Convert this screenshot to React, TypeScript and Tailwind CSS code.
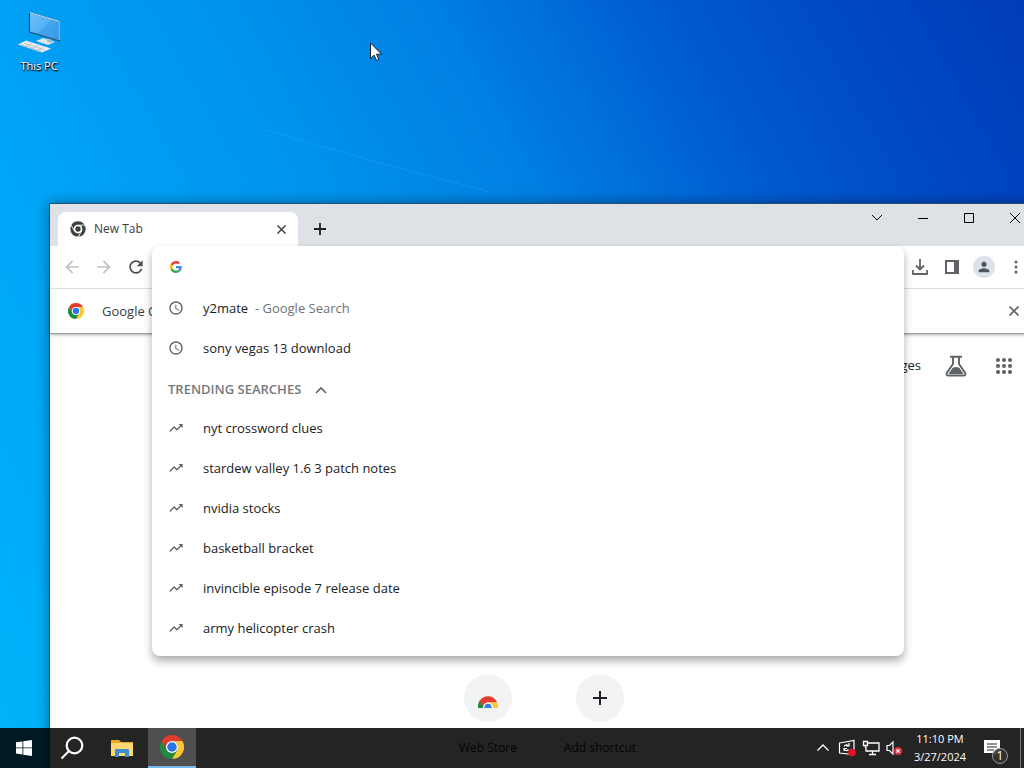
import { useState, type ReactNode } from "react"
import clsx from "clsx"

const recent = [
  { text: "y2mate", hint: "Google Search" },
  { text: "sony vegas 13 download", hint: "" },
]

const trending = [
  "nyt crossword clues",
  "stardew valley 1.6 3 patch notes",
  "nvidia stocks",
  "basketball bracket",
  "invincible episode 7 release date",
  "army helicopter crash",
]

const paths = {
  back: "M20 11H7.83l5.59-5.59L12 4l-8 8 8 8 1.41-1.41L7.83 13H20v-2z",
  forward: "M4 11h12.17l-5.59-5.59L12 4l8 8-8 8-1.41-1.41L16.17 13H4v-2z",
  reload:
    "M17.65 6.35C16.2 4.9 14.21 4 12 4c-4.42 0-7.99 3.58-7.99 8s3.57 8 7.99 8c3.73 0 6.84-2.55 7.73-6h-2.08c-.82 2.33-3.04 4-5.65 4-3.31 0-6-2.69-6-6s2.69-6 6-6c1.66 0 3.14.69 4.22 1.78L13 11h7V4l-2.35 2.35z",
  clock:
    "M11.99 2C6.47 2 2 6.48 2 12s4.47 10 9.99 10C17.52 22 22 17.52 22 12S17.52 2 11.99 2zM12 20c-4.42 0-8-3.58-8-8s3.58-8 8-8 8 3.58 8 8-3.58 8-8 8zm.5-13H11v6l5.25 3.15.75-1.23-4.5-2.67z",
  trend: "M16 6l2.29 2.29-4.88 4.88-4-4L2 16.59 3.41 18l6-6 4 4 6.3-6.29L22 12V6z",
  person:
    "M12 12c2.21 0 4-1.79 4-4s-1.79-4-4-4-4 1.79-4 4 1.79 4 4 4zm0 2c-2.67 0-8 1.34-8 4v2h16v-2c0-2.66-5.33-4-8-4z",
}

function Icon({ d, className }: { d: string; className?: string }) {
  return (
    <svg viewBox="0 0 24 24" fill="currentColor" className={clsx("shrink-0", className)} aria-hidden="true">
      <path d={d} />
    </svg>
  )
}

function ChromeLogo({ className, mono = false }: { className?: string; mono?: boolean }) {
  const arm = "M44.8 12A24 24 0 0 0 3.2 12L13.6 30A12 12 0 0 1 24 12Z"
  const gap = mono ? { stroke: "#fff", strokeWidth: 2 } : {}
  return (
    <svg viewBox="0 0 48 48" className={className} aria-hidden="true">
      <path d={arm} transform="rotate(120 24 24)" fill={mono ? "#3c4043" : "#fcc934"} {...gap} />
      <path d={arm} transform="rotate(-120 24 24)" fill={mono ? "#3c4043" : "#1e8e3e"} {...gap} />
      <path d={arm} fill={mono ? "#3c4043" : "#e33b2e"} {...gap} />
      <circle cx="24" cy="24" r="12" fill="#fff" />
      <circle cx="24" cy="24" r={mono ? 8 : 9.5} fill={mono ? "#3c4043" : "#2a75e6"} />
    </svg>
  )
}

function GoogleG() {
  return (
    <svg viewBox="0 0 48 48" className="size-3 shrink-0" aria-hidden="true">
      <path fill="#EA4335" d="M24 9.5c3.54 0 6.71 1.22 9.21 3.6l6.85-6.85C35.9 2.38 30.47 0 24 0 14.62 0 6.51 5.38 2.56 13.22l7.98 6.19C12.43 13.72 17.74 9.5 24 9.5z" />
      <path fill="#4285F4" d="M46.98 24.55c0-1.57-.15-3.09-.38-4.55H24v9.02h12.94c-.58 2.96-2.26 5.48-4.78 7.18l7.73 6c4.51-4.18 7.09-10.36 7.09-17.65z" />
      <path fill="#FBBC05" d="M10.53 28.59c-.48-1.45-.76-2.99-.76-4.59s.27-3.14.76-4.59l-7.98-6.19C.92 16.46 0 20.12 0 24c0 3.88.92 7.54 2.56 10.78l7.97-6.19z" />
      <path fill="#34A853" d="M24 48c6.48 0 11.93-2.13 15.89-5.81l-7.73-6c-2.15 1.45-4.92 2.3-8.16 2.3-6.26 0-11.57-4.22-13.47-9.91l-7.98 6.19C6.51 42.62 14.62 48 24 48z" />
    </svg>
  )
}

function CloseIcon({ className }: { className?: string }) {
  return (
    <svg viewBox="0 0 10 10" fill="none" stroke="currentColor" strokeWidth="1.6" className={className} aria-hidden="true">
      <path d="M.5 .5l9 9M9.5 .5l-9 9" />
    </svg>
  )
}

function ToolButton({ label, className, children }: { label: string; className?: string; children: ReactNode }) {
  return (
    <button aria-label={label} className={clsx("flex size-8 shrink-0 items-center justify-center", className)}>
      {children}
    </button>
  )
}

function ThisPC() {
  return (
    <button className="absolute top-2 left-0 flex w-[78px] flex-col items-center gap-px">
      <svg viewBox="0 0 48 48" className="size-12" aria-hidden="true">
        <defs>
          <linearGradient id="screen" x1="0" y1="0" x2="1" y2="1">
            <stop offset="0" stopColor="#6fc0f7" />
            <stop offset="0.5" stopColor="#55b1f4" />
            <stop offset="0.5" stopColor="#43a4ee" />
            <stop offset="1" stopColor="#3898e6" />
          </linearGradient>
        </defs>
        <path d="M21 33l7-3 12 4-7 3z" fill="#dfe6ee" />
        <path d="M32 30l5 2v3l-5-1z" fill="#a9bccd" />
        <path d="M14.5 4.5l30 9v19.5l-30-9z" fill="url(#screen)" stroke="#24445f" strokeWidth="1" />
        <path d="M14.5 4.5l30 9" stroke="#d7e6f2" strokeWidth="1" />
        <path d="M44.5 14v18" stroke="#c9a98a" strokeWidth="1" />
        <path d="M3 36.5l8-4 25 8-9 4z" fill="#eceef2" />
        <path d="M6 36.5l21 7M9 35l21 7M10 39l7-4M16 41l7-4M22 43l7-4" stroke="#a9a4b4" strokeWidth="0.6" />
      </svg>
      <span className="text-[11px] leading-[18px] text-white [text-shadow:1px_1px_2px_#000,0_1px_1px_#000]">This PC</span>
    </button>
  )
}

function Suggestion({ icon, text, hint }: { icon: string; text: string; hint?: string }) {
  return (
    <li>
      <button className="flex h-10 w-full items-center gap-[19px] px-4 text-left text-[13px] text-[#202124]">
        <Icon d={icon} className="size-4 text-[#5f6368]" />
        <span className="pt-0.5">
          {text}
          {hint && <span className="text-[#6f7377]"> &nbsp;- {hint}</span>}
        </span>
      </button>
    </li>
  )
}

function Omnibox() {
  const [open, setOpen] = useState(true)

  return (
    <div className="relative h-full flex-1">
      <div className="absolute inset-x-0 top-0 z-20 rounded-lg bg-white pb-2 shadow-[0_5px_9px_rgba(0,0,0,0.32)]">
        <div className="flex h-[42px] items-center gap-[21px] px-[18px]">
          <GoogleG />
          <input aria-label="Address and search bar" className="h-8 flex-1 text-[13px] caret-transparent outline-none" />
        </div>
        <ul>
          {recent.map((r) => (
            <Suggestion key={r.text} icon={paths.clock} text={r.text} hint={r.hint} />
          ))}
        </ul>
        <button
          onClick={() => setOpen(!open)}
          className="flex h-10 items-center gap-[14px] px-4 pt-1 text-[13px] font-semibold text-[#75797d]"
        >
          TRENDING SEARCHES
          <svg viewBox="0 0 12 12" fill="none" stroke="#5f6368" strokeWidth="1.6" className="size-3" aria-hidden="true">
            <path d={open ? "M1 9l5-5 5 5" : "M1 4l5 5 5-5"} />
          </svg>
        </button>
        {open && (
          <ul>
            {trending.map((t) => (
              <Suggestion key={t} icon={paths.trend} text={t} />
            ))}
          </ul>
        )}
      </div>
    </div>
  )
}

function TabStrip() {
  return (
    <div className="flex h-[42px] bg-[#dee1e6]">
      <div className="mt-2 ml-2 flex w-60 items-center rounded-t-lg bg-white pr-[10px] pl-3 text-[#3c4043]">
        <ChromeLogo mono className="size-4" />
        <span className="ml-2 flex-1 text-xs">New Tab</span>
        <button aria-label="Close tab" className="p-0.5">
          <CloseIcon className="size-[9px]" />
        </button>
      </div>
      <button aria-label="New tab" className="mt-2 ml-4 text-[#202124]">
        <svg viewBox="0 0 12 12" stroke="currentColor" strokeWidth="1.8" className="size-3" aria-hidden="true">
          <path d="M6 0v12M0 6h12" />
        </svg>
      </button>
      <div className="ml-auto flex h-7 text-black">
        {[
          ["Search tabs", "M1 3l5 5 5-5"],
          ["Minimize", "M1 6.5h10"],
          ["Maximize", "M1.5 1.5h9v9h-9z"],
          ["Close", "M1 1l10 10M11 1L1 11"],
        ].map(([label, d]) => (
          <button key={label} aria-label={label} className="flex w-[46px] items-center justify-center">
            <svg viewBox="0 0 12 12" fill="none" stroke="currentColor" className="size-3" aria-hidden="true">
              <path d={d} />
            </svg>
          </button>
        ))}
      </div>
    </div>
  )
}

function Toolbar() {
  return (
    <div className="flex h-[42px] items-center bg-white px-[6px] text-[#5f6368]">
      <ToolButton label="Back" className="text-[#bdc1c6]">
        <Icon d={paths.back} className="size-5" />
      </ToolButton>
      <ToolButton label="Forward" className="text-[#bdc1c6]">
        <Icon d={paths.forward} className="size-5" />
      </ToolButton>
      <ToolButton label="Reload" className="text-[#4a4d51]">
        <Icon d={paths.reload} className="size-5" />
      </ToolButton>
      <Omnibox />
      <ToolButton label="Downloads">
        <svg viewBox="0 0 16 16" fill="none" stroke="currentColor" strokeWidth="1.8" className="size-4" aria-hidden="true">
          <path d="M8 0v10M4 6.5l4 4 4-4M1 11v4h14v-4" />
        </svg>
      </ToolButton>
      <ToolButton label="Side panel">
        <svg viewBox="0 0 14 14" className="size-[14px]" aria-hidden="true">
          <path d="M1 1h12v12H1z" fill="none" stroke="currentColor" strokeWidth="2" />
          <path d="M9 1h4v12H9z" fill="currentColor" />
        </svg>
      </ToolButton>
      <ToolButton label="Profile">
        <span className="flex size-[22px] items-center justify-center rounded-full bg-[#dee3ea]">
          <Icon d={paths.person} className="size-4 text-[#4d5662]" />
        </span>
      </ToolButton>
      <ToolButton label="Menu">
        <svg viewBox="0 0 4 14" fill="currentColor" className="h-[14px]" aria-hidden="true">
          <circle cx="2" cy="2" r="1.5" />
          <circle cx="2" cy="7" r="1.5" />
          <circle cx="2" cy="12" r="1.5" />
        </svg>
      </ToolButton>
    </div>
  )
}

function NewTabPage() {
  return (
    <main className="flex flex-1 flex-col bg-white text-[#202124]">
      <nav className="flex h-[60px] items-center justify-end pt-1 pr-6">
        <a href="#images" className="text-[13px]">
          Images
        </a>
        <button aria-label="Search labs" className="ml-6">
          <svg viewBox="0 0 22 22" className="size-[22px] text-[#5f6368]" aria-hidden="true">
            <path d="M5 1.8h12M8 2v7L1.8 18Q1 20.5 3 20.5h16q2 0 1.2-2.5L14 9V2" fill="none" stroke="currentColor" strokeWidth="1.9" />
            <path d="M7.5 13Q11 11 14.5 13L18.5 19h-15z" fill="currentColor" />
          </svg>
        </button>
        <button aria-label="Google apps" className="ml-[27px]">
          <svg viewBox="0 0 20 20" fill="#5f6368" className="size-5" aria-hidden="true">
            {[4, 10, 16].map((y) => [4, 10, 16].map((x) => <circle key={`${x}-${y}`} cx={x} cy={y} r="2.1" />))}
          </svg>
        </button>
      </nav>

      <div className="mt-auto flex justify-center pb-3 text-xs">
        <a href="#store" className="flex w-28 flex-col items-center gap-[18px]">
          <span className="flex size-12 items-center justify-center rounded-full bg-[#f1f3f4] pt-2">
            <svg viewBox="0 0 20 12" className="h-3 w-5" aria-hidden="true">
              <path d="M0 12V10A10 10 0 0 1 2 4L7 12z" fill="#1e8e3e" />
              <path d="M1.5 5A10 10 0 0 1 18.5 5L19 6.5H10a5 5 0 0 0-5 4z" fill="#e33b2e" />
              <path d="M10 6.5h9.2A10 10 0 0 1 20 10v2h-5z" fill="#fcc934" />
              <path d="M5 12a5 5.5 0 0 1 10 0z" fill="#fff" />
              <path d="M6.3 12a3.7 4.2 0 0 1 7.4 0z" fill="#3b7de9" />
            </svg>
          </span>
          Web Store
        </a>
        <button className="flex w-28 flex-col items-center gap-[18px]">
          <span className="flex size-12 items-center justify-center rounded-full bg-[#f1f3f4]">
            <svg viewBox="0 0 14 14" stroke="#202124" strokeWidth="2" className="size-[14px]" aria-hidden="true">
              <path d="M7 0v14M0 7h14" />
            </svg>
          </span>
          Add shortcut
        </button>
      </div>
    </main>
  )
}

function BrowserWindow() {
  return (
    <section className="absolute top-[203px] -right-[14px] bottom-0 left-[49px] flex flex-col border-t border-l border-[#24506e] shadow-[0_0_12px_rgba(0,0,0,0.4)]">
      <TabStrip />
      <div className="relative z-20">
        <Toolbar />
      </div>
      <div className="relative z-10 flex h-[46px] items-center justify-between border-t border-b border-t-[#dcdee1] border-b-[#9a9da0] bg-white pr-[19px] pl-[18px] shadow-[0_1px_3px_rgba(0,0,0,0.3)]">
        <div className="flex items-center gap-[18px] text-[13px] text-[#3c4043]">
          <ChromeLogo className="size-4" />
          <span className="pt-0.5">Google Chrome</span>
        </div>
        <button aria-label="Dismiss" className="text-[#5f6368]">
          <CloseIcon className="size-[10px]" />
        </button>
      </div>
      <NewTabPage />
    </section>
  )
}

function Taskbar() {
  return (
    <footer className="relative z-30 mt-auto flex h-10 bg-black/86 text-white">
      <button aria-label="Start" className="flex w-12 items-center justify-center">
        <svg viewBox="0 0 16 16" fill="#fff" className="size-4" aria-hidden="true">
          <path d="M0 2.3l6.500-.9v6.100H0zM7.3 1.3L16 0v7.500H7.300zM0 8.300h6.500v6.200L0 13.600zM7.300 8.300H16V16l-8.700-1.300z" />
        </svg>
      </button>
      <button aria-label="Search" className="flex w-12 items-center justify-center">
        <svg viewBox="0 0 24 24" fill="none" stroke="#fff" strokeWidth="2.2" className="size-6" aria-hidden="true">
          <circle cx="14.5" cy="9.5" r="7.8" />
          <path d="M9 15l-7.5 7.5" />
        </svg>
      </button>
      <button aria-label="File Explorer" className="flex w-[52px] items-center justify-center">
        <svg viewBox="0 0 22 18" className="h-[18px] w-[22px]" aria-hidden="true">
          <path d="M0 1h8l2 2h12v14H0z" fill="#e9a820" />
          <path d="M0 4h22v13H0z" fill="#fcd873" />
          <path d="M4 18v-7q0-1 1-1h12q1 0 1 1v7h-4v-4H8v4z" fill="#3d8fd1" />
        </svg>
      </button>
      <button aria-label="Google Chrome" className="flex w-12 items-center justify-center border-b-2 border-[#76b9ed] bg-white/20">
        <ChromeLogo className="size-6" />
      </button>

      <div className="ml-auto flex items-center">
        <button aria-label="Show hidden icons">
          <svg viewBox="0 0 12 12" fill="none" stroke="#fff" strokeWidth="1.3" className="size-3" aria-hidden="true">
            <path d="M.5 8.5L6 3l5.5 5.5" />
          </svg>
        </button>
        <svg viewBox="0 0 18 18" fill="none" stroke="#fff" strokeWidth="1.2" className="ml-[9px] size-[18px]" aria-hidden="true">
          <path d="M1.5 4L16 1.5v14L1.5 14z" />
          <path d="M6 7.5Q7.5 5 10.5 6.5M11 4v3H8M6 12V9.500h3M6 10Q8 13 10.5 10.5" />
          <circle cx="14" cy="13.5" r="3.8" fill="#e81123" stroke="none" />
        </svg>
        <svg viewBox="0 0 18 16" fill="none" stroke="#fff" strokeWidth="1.3" className="ml-[6px] h-4 w-[18px]" aria-hidden="true">
          <path d="M6 3h11v8H4V7M10.5 11v3M7 14.5h7M1.5 1.5h4v4h-4zM3.5 5.5V8" />
        </svg>
        <svg viewBox="0 0 18 16" fill="none" stroke="#fff" strokeWidth="1.2" className="ml-[6px] h-4 w-[18px]" aria-hidden="true">
          <path d="M1 5.5h2.5L7 2v12l-3.5-3.5H1z" />
          <circle cx="12" cy="11" r="4" fill="#e0303c" stroke="none" />
          <path d="M10.3 9.3l3.400 3.400M13.7 9.3l-3.400 3.400" />
        </svg>
        <button className="ml-1 w-16 text-center text-[11px] leading-[18px]">
          11:10 PM
          <br />
          3/27/2024
        </button>
        <button aria-label="1 notification" className="relative mx-3 size-6">
          <svg viewBox="0 0 16 16" className="size-4" aria-hidden="true">
            <path d="M0 0h16v13h-4v3l-3-3H0z" fill="#fff" />
            <path d="M3 4h10M3 7h10M3 10h7" stroke="#262626" strokeWidth="1.2" />
          </svg>
          <span className="absolute right-0 -bottom-1 flex size-4 items-center justify-center rounded-full border border-[#999] bg-[#333]/90 text-xs leading-none">
            1
          </span>
        </button>
        <div className="h-10 w-1 border-l border-white/40" />
      </div>
    </footer>
  )
}

export default function App() {
  return (
    <div className="relative flex h-screen flex-col overflow-hidden bg-[linear-gradient(61deg,#00b4fa_0%,#00a6f8_22%,#0096ee_42%,#007fe2_59%,#0058cf_76%,#0045c2_90%,#003cb6_100%)] font-['Open_Sans','Noto_Sans',sans-serif]">
      {/* light ray of the wallpaper */}
      <svg viewBox="0 0 500 200" className="absolute top-0 left-0 h-[200px] w-[500px]" aria-hidden="true">
        <path d="M262 129L380 163L490 192" fill="none" stroke="#5cc4ff" strokeOpacity="0.2" />
      </svg>

      <ThisPC />
      <BrowserWindow />
      <Taskbar />

      {/* mouse pointer */}
      <svg viewBox="0 0 12 19" className="absolute top-[42px] left-[370px] z-40 h-[19px] w-3" aria-hidden="true">
        <path d="M.5 1v15.5l3.6-3.4 2.4 5.3 2.3-1-2.3-5.2h5z" fill="#fff" stroke="#111" strokeWidth="0.9" />
      </svg>
    </div>
  )
}
